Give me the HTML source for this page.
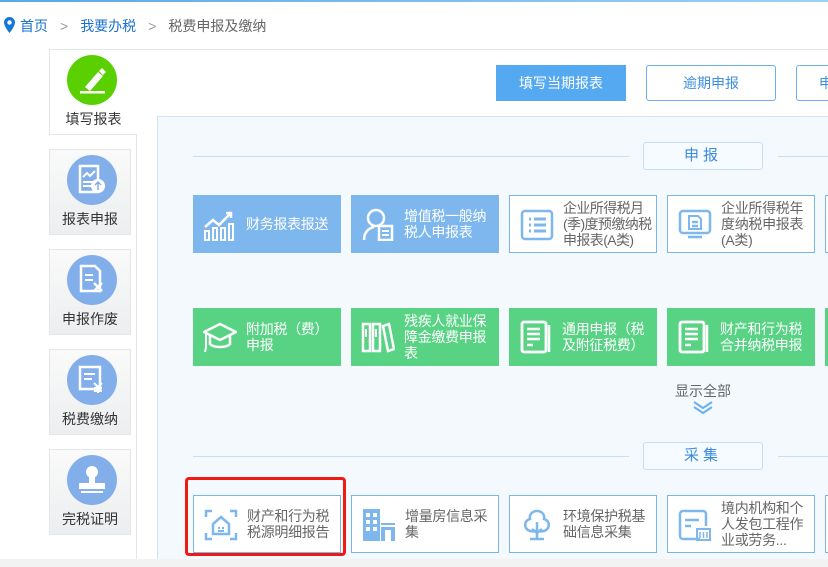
<!DOCTYPE html>
<html><head><meta charset="utf-8"><style>
*{margin:0;padding:0;box-sizing:border-box}
body{width:828px;height:567px;overflow:hidden;background:#fff;position:relative;font-family:"Liberation Sans","Noto Sans CJK SC",sans-serif;font-size:13px;color:#555}
.a{position:absolute}
.top{left:0;top:0;width:828px;height:2px;background:linear-gradient(90deg,#5aa8e8,#9fd0f3)}
.bc{top:16px;left:20px;font-size:14px;white-space:nowrap}
.tab{left:49px;width:82px;height:86px;border:1px solid #e3e6ea;background:linear-gradient(#fafafa,#eceeef)}
.circ{position:absolute;left:17px;top:5px;width:50px;height:50px;border-radius:50%;background:#82aeea}
.tl{position:absolute;left:0;right:0;top:59px;text-align:center;font-size:14px;color:#333}
.tile{width:148px;height:58px;font-size:14px;line-height:16px}
.tile .ic{position:absolute;left:10px;top:12px;width:34px;height:34px}
.tile .tx{position:absolute;left:53px;top:50%;transform:translateY(-50%);white-space:nowrap;letter-spacing:-0.3px}
.b{background:#7eb7ee;color:#fff}
.g{background:#58d384;color:#fff}
.w{background:#fff;border:1px solid #7ab4ec;color:#666}
.sec{width:120px;height:28px;border:1px solid #c8def5;border-radius:3px;background:#f6fbff;color:#3b8be0;font-size:15px;text-align:center;line-height:26px;letter-spacing:4px}
</style></head><body>
<div class="a top"></div>
<svg class="a" style="left:4px;top:17px" width="11" height="16" viewBox="0 0 11 16"><path d="M5.5 0C2.5 0 0 2.4 0 5.4 0 9.5 5.5 16 5.5 16S11 9.5 11 5.4C11 2.4 8.5 0 5.5 0z" fill="#1677d6"/><circle cx="5.5" cy="5.5" r="2.2" fill="#fff"/></svg>
<div class="a bc"><span style="color:#1a73d1">首页</span><span style="color:#999;margin:0 12px">&gt;</span><span style="color:#1a73d1">我要办税</span><span style="color:#999;margin:0 12px">&gt;</span><span style="color:#666">税费申报及缴纳</span></div>
<div class="a" style="left:136px;top:49px;width:692px;height:1px;background:#e3e6ea"></div>
<div class="a" style="left:136px;top:134px;width:1px;height:433px;background:#e3e6ea"></div>
<div class="a" style="left:49px;top:49px;width:88px;height:86px;border:1px solid #e3e6ea;border-right:none;background:#fff">
<div style="position:absolute;left:17px;top:5px;width:50px;height:50px;border-radius:50%;background:#5ad000"><svg width="50" height="50" viewBox="0 0 50 50"><path d="M18 32 L31 17 L36 21 L23 36 Z" fill="#fff"/><path d="M32 16 l3-3 l4 4 l-3 3z" fill="#fff"/><rect x="13" y="36" width="25" height="2.5" fill="#fff"/></svg></div>
<div class="tl" style="top:59px">填写报表</div></div>
<div class="a tab" style="top:149px"><div class="circ"><svg width="50" height="50"><rect x="13" y="11" width="18" height="26" fill="none" stroke="#fff" stroke-width="2.5"/><path d="M16 22l4-4 3 3 5-5" stroke="#fff" stroke-width="2" fill="none"/><path d="M16 27h10M16 31h8" stroke="#fff" stroke-width="2"/><circle cx="31" cy="31" r="7" fill="#fff"/><path d="M31 35v-7M28 30l3-3 3 3" stroke="#82aeea" stroke-width="1.5" fill="none"/></svg></div><div class="tl">报表申报</div></div>
<div class="a tab" style="top:249px"><div class="circ"><svg width="50" height="50"><path d="M14 11h14l5 5v20H14z" fill="none" stroke="#fff" stroke-width="2.5"/><path d="M18 20h8M18 25h8" stroke="#fff" stroke-width="2"/><path d="M27 28l8 8M35 28l-8 8" stroke="#fff" stroke-width="2.5"/></svg></div><div class="tl">申报作废</div></div>
<div class="a tab" style="top:349px"><div class="circ"><svg width="50" height="50"><rect x="13" y="12" width="20" height="22" fill="none" stroke="#fff" stroke-width="2.5"/><path d="M17 19h11M17 24h8" stroke="#fff" stroke-width="2"/><path d="M27 28l4 4 4-4M31 32v6M27 33h8M27 36h8" stroke="#fff" stroke-width="2" fill="none"/></svg></div><div class="tl">税费缴纳</div></div>
<div class="a tab" style="top:449px"><div class="circ"><svg width="50" height="50"><circle cx="25" cy="17" r="6" fill="#fff"/><path d="M22 22h6v6h-6z" fill="#fff"/><rect x="12" y="28" width="26" height="6" fill="#fff"/><rect x="14" y="36" width="22" height="2" fill="#fff"/></svg></div><div class="tl">完税证明</div></div>

<div class="a" style="left:496px;top:65px;width:130px;height:36px;background:#55a9f0;color:#fff;font-size:14px;text-align:center;line-height:36px">填写当期报表</div>
<div class="a" style="left:646px;top:65px;width:130px;height:36px;border:1px solid #6ab0ef;border-radius:3px;color:#3d8fe0;font-size:14px;text-align:center;line-height:34px">逾期申报</div>
<div class="a" style="left:796px;top:65px;width:60px;height:36px;border:1px solid #6ab0ef;border-radius:3px;color:#3d8fe0;font-size:14px;line-height:34px;padding-left:22px">申</div>

<div class="a" style="left:157px;top:116px;width:680px;height:444px;background:#f3f9fd;border:1px solid #cfe2f6"></div>
<div class="a" style="left:193px;top:156px;width:436px;height:1px;background:#c8def5"></div>
<div class="a" style="left:778px;top:156px;width:60px;height:1px;background:#c8def5"></div>
<div class="a sec" style="left:643px;top:142px">申报</div>
<div class="a" style="left:193px;top:456px;width:436px;height:1px;background:#c8def5"></div>
<div class="a" style="left:778px;top:456px;width:60px;height:1px;background:#c8def5"></div>
<div class="a sec" style="left:643px;top:442px">采集</div>

<div class="a tile b" style="left:193px;top:195px"><svg class="ic" viewBox="0 0 34 34"><path d="M2 20l8-7 6 5 12-12M23 6h5v5" stroke="#fff" stroke-width="2.5" fill="none"/><rect x="2" y="24" width="4" height="9" fill="none" stroke="#fff" stroke-width="2"/><rect x="10" y="21" width="4" height="12" fill="none" stroke="#fff" stroke-width="2"/><rect x="18" y="21" width="4" height="12" fill="none" stroke="#fff" stroke-width="2"/><rect x="26" y="17" width="4" height="16" fill="none" stroke="#fff" stroke-width="2"/></svg><div class="tx">财务报表报送</div></div>
<div class="a tile b" style="left:351px;top:195px"><svg class="ic" viewBox="0 0 34 34"><circle cx="15" cy="11" r="8" fill="none" stroke="#fff" stroke-width="2.5"/><path d="M3 33c0-8 5-12 10-13" stroke="#fff" stroke-width="2.5" fill="none"/><rect x="18" y="19" width="13" height="14" fill="none" stroke="#fff" stroke-width="2.5"/><path d="M21 24h7M21 28h7" stroke="#fff" stroke-width="2"/></svg><div class="tx">增值税一般纳<br>税人申报表</div></div>
<div class="a tile w" style="left:509px;top:195px"><svg class="ic" viewBox="0 0 34 34"><rect x="2" y="3" width="30" height="28" rx="3" fill="none" stroke="#7eb7ee" stroke-width="2.5"/><path d="M9 11h2M9 17h2M9 23h2M14 11h12M14 17h12M14 23h12" stroke="#7eb7ee" stroke-width="3"/></svg><div class="tx" style="letter-spacing:-0.6px">企业所得税月<br>(季)度预缴纳税<br>申报表(A类)</div></div>
<div class="a tile w" style="left:667px;top:195px"><svg class="ic" viewBox="0 0 34 34"><rect x="2" y="3" width="30" height="22" rx="3" fill="none" stroke="#7eb7ee" stroke-width="2.5"/><path d="M11 8h9l3 3v10H11z" fill="none" stroke="#7eb7ee" stroke-width="2"/><path d="M14 14h6M14 18h6M10 29h14" stroke="#7eb7ee" stroke-width="2.5"/></svg><div class="tx">企业所得税年<br>度纳税申报表<br>(A类)</div></div>
<div class="a tile w" style="left:825px;top:195px"></div>

<div class="a tile g" style="left:193px;top:308px"><svg class="ic" viewBox="0 0 34 34"><path d="M1 12l16-8 16 8-16 8z" fill="none" stroke="#fff" stroke-width="2.5"/><path d="M7 15v9c4 4 16 4 20 0v-9" fill="none" stroke="#fff" stroke-width="2.5"/><path d="M3 13v14l-1 5" stroke="#fff" stroke-width="2" fill="none"/></svg><div class="tx">附加税（费）<br>申报</div></div>
<div class="a tile g" style="left:351px;top:308px"><svg class="ic" viewBox="0 0 34 34"><rect x="2" y="4" width="7" height="27" fill="none" stroke="#fff" stroke-width="2.5"/><rect x="12" y="4" width="7" height="27" fill="none" stroke="#fff" stroke-width="2.5"/><path d="M22 6l6-2 5 25-6 2z" fill="none" stroke="#fff" stroke-width="2.5"/><path d="M5 9v8M15 9v8" stroke="#fff" stroke-width="2"/></svg><div class="tx">残疾人就业保<br>障金缴费申报<br>表</div></div>
<div class="a tile g" style="left:509px;top:308px"><svg class="ic" viewBox="0 0 34 34"><rect x="3" y="2" width="24" height="30" rx="2" fill="none" stroke="#fff" stroke-width="2.8"/><path d="M30 5v27M8 9h13M8 14h13M8 19h13M8 25h6" stroke="#fff" stroke-width="2.5"/></svg><div class="tx">通用申报（税<br>及附征税费）</div></div>
<div class="a tile g" style="left:667px;top:308px"><svg class="ic" viewBox="0 0 34 34"><rect x="3" y="2" width="24" height="30" rx="2" fill="none" stroke="#fff" stroke-width="2.8"/><path d="M30 5v27M8 9h13M8 14h13M8 19h13M8 25h6" stroke="#fff" stroke-width="2.5"/></svg><div class="tx">财产和行为税<br>合并纳税申报</div></div>
<div class="a tile g" style="left:825px;top:308px"></div>

<div class="a" style="left:663px;top:381px;width:80px;text-align:center;font-size:14px;color:#666">显示全部</div>
<svg class="a" style="left:692px;top:400px" width="22" height="15" viewBox="0 0 22 15"><path d="M2 2l9 6 9-6M2 7l9 6 9-6" stroke="#6ab0ef" stroke-width="2" fill="none"/></svg>

<div class="a tile w" style="left:193px;top:495px"><svg class="ic" viewBox="0 0 34 34"><path d="M2 9V3h6M26 3h6v6M32 25v6h-6M8 31H2v-6" stroke="#7eb7ee" stroke-width="2.5" fill="none"/><path d="M9 16l8-7 8 7v10H9z" fill="none" stroke="#7eb7ee" stroke-width="2.5"/><path d="M14 20h2M18 20h2M14 23h6" stroke="#7eb7ee" stroke-width="2"/></svg><div class="tx">财产和行为税<br>税源明细报告</div></div>
<div class="a tile w" style="left:351px;top:495px"><svg class="ic" viewBox="0 0 34 34"><rect x="1" y="1" width="17" height="32" fill="#7eb7ee"/><path d="M4 5h4v4H4zM11 5h4v4h-4zM4 12h4v4H4zM11 12h4v4h-4zM4 19h4v4H4zM11 19h4v4h-4z" fill="#fff"/><rect x="19" y="15" width="14" height="18" fill="#7eb7ee"/><rect x="23" y="22" width="6" height="11" fill="#fff"/><rect x="19" y="17" width="14" height="2" fill="#fff"/></svg><div class="tx">增量房信息采<br>集</div></div>
<div class="a tile w" style="left:509px;top:495px"><svg class="ic" viewBox="0 0 34 34"><path d="M17 3c-5 0-8 4-7 8-4 1-6 5-4 9 2 3 6 4 9 3h4c3 1 7 0 9-3 2-4 0-8-4-9 1-4-2-8-7-8z" fill="none" stroke="#7eb7ee" stroke-width="2.5"/><path d="M17 14v17M12 21l5 4 5-4M10 31h14" stroke="#7eb7ee" stroke-width="2.5" fill="none"/></svg><div class="tx">环境保护税基<br>础信息采集</div></div>
<div class="a tile w" style="left:667px;top:495px"><svg class="ic" viewBox="0 0 34 34"><path d="M22 31H5a3 3 0 0 1-3-3V6a3 3 0 0 1 3-3h20a3 3 0 0 1 3 3v12" fill="none" stroke="#7eb7ee" stroke-width="2.5"/><path d="M7 12h14M7 18h6" stroke="#7eb7ee" stroke-width="2.5"/><rect x="19" y="21" width="13" height="11" fill="none" stroke="#7eb7ee" stroke-width="2"/><path d="M22 24v6M25.5 24v6M29 24v6" stroke="#7eb7ee" stroke-width="1.5"/></svg><div class="tx">境内机构和个<br>人发包工程作<br>业或劳务...</div></div>
<div class="a tile w" style="left:825px;top:495px"></div>

<div class="a" style="left:185px;top:477px;width:161px;height:79px;border:3px solid #f01a12;border-radius:4px"></div>
<div class="a" style="left:0;top:559px;width:828px;height:8px;background:#f2f2f2"></div>
</body></html>
